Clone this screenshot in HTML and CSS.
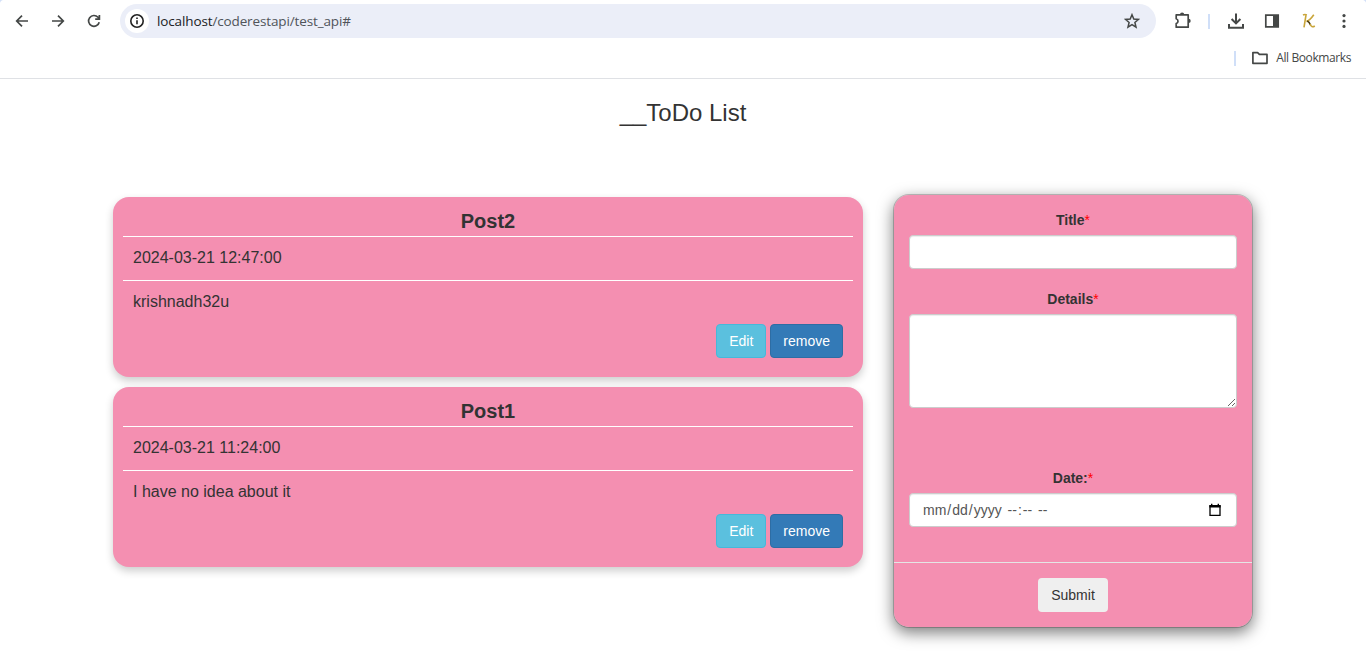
FILE: index.html
```html
<!DOCTYPE html>
<html lang="en">
<head>
<meta charset="utf-8">
<title>ToDo List</title>
<link rel="stylesheet" href="styles.css">
</head>
<body>
<header class="browser">
  <div class="toolbar">
    <svg class="icon back" viewBox="0 0 16 16"><path d="M14 8H3M8 2.7L2.7 8L8 13.3"/></svg>
    <svg class="icon forward" viewBox="0 0 16 16"><path d="M2 8H13M8 2.7L13.3 8L8 13.3"/></svg>
    <svg class="icon reload" viewBox="0 0 16 16"><path d="M13.2 9.2A5.4 5.4 0 1 1 12 4.3L13 5.4M13.4 2V6.2H9.2"/></svg>
    <div class="address">
      <span class="site"><svg class="icon" viewBox="0 0 16 16"><circle cx="8" cy="8" r="6.2"/><path d="M8 7.2V11.3M8 4.6V6"/></svg></span>
      <span class="url"><span class="host">localhost</span>/coderestapi/test_api#</span>
      <svg class="icon star" viewBox="0 0 16 16"><path d="M8 1.7L9.8 6L14.5 6.4L10.9 9.5L12 14.1L8 11.6L4 14.1L5.1 9.5L1.5 6.4L6.2 6Z"/></svg>
    </div>
    <svg class="icon puzzle" viewBox="0 0 18 18"><path d="M2.2 2.8H14.2V15.2H2.2V11.6A2.5 2.5 0 0 0 2.2 6.8Z"/><path class="solid" d="M6 2.4A2.1 1.9 0 0 1 10.2 2.4ZM14.6 6.8A2.1 2.1 0 0 1 14.6 11Z"/></svg>
    <span class="divider toolbar-divider"></span>
    <svg class="icon download" viewBox="0 0 18 18"><path d="M9 1.5V11.2M4.6 7L9 11.4L13.4 7M2 12V15.8H16V12"/></svg>
    <svg class="icon panel" viewBox="0 0 16 16"><path d="M1.8 2.2H14.2V13.8H1.8Z"/><path class="solid" d="M9 2H14.4V14H9Z"/></svg>
    <svg class="icon profile" viewBox="0 0 16 16"><path class="gold" d="M2 2Q4 1 5.8 2M5 2L3 14.3M5.3 8.4Q8.5 8 12.8 1.8"/><path class="dark" d="M6.2 8Q8.3 8.7 9.5 12"/><path class="gold" d="M9.2 11Q10.4 15.2 13.8 13"/></svg>
    <svg class="icon more" viewBox="0 0 16 16"><circle cx="8" cy="2.6" r="1.6"/><circle cx="8" cy="8" r="1.6"/><circle cx="8" cy="13.4" r="1.6"/></svg>
  </div>
  <div class="bookmarks">
    <span class="divider"></span>
    <svg class="icon folder" viewBox="0 0 18 16"><path d="M1.9 2.6H6.6L8.4 4.4H16V13.3H1.9Z"/></svg>
    <span class="bookmarks-label">All Bookmarks</span>
  </div>
</header>
<main>
  <h1 class="page-title">__ToDo List</h1>
  <div class="content">
    <section class="posts">
      <article class="post">
        <h2 class="post-title">Post2</h2>
        <p class="post-row">2024-03-21 12:47:00</p>
        <p class="post-row">krishnadh32u</p>
        <div class="actions"><button class="btn info">Edit</button><button class="btn primary">remove</button></div>
      </article>
      <article class="post">
        <h2 class="post-title">Post1</h2>
        <p class="post-row">2024-03-21 11:24:00</p>
        <p class="post-row">I have no idea about it</p>
        <div class="actions"><button class="btn info">Edit</button><button class="btn primary">remove</button></div>
      </article>
    </section>
    <form class="editor">
      <div class="fields">
        <label class="label" for="title">Title<span class="required">*</span></label>
        <input class="control" id="title" type="text">
        <label class="label details-label" for="details">Details<span class="required">*</span></label>
        <textarea class="control details" id="details"></textarea>
        <label class="label date-label">Date:<span class="required">*</span></label>
        <div class="control date" tabindex="0">
          <span class="date-text"><span class="part">mm</span>/<span class="part">dd</span>/<span class="part">yyyy</span> <span class="part">--</span>:<span class="part">--</span> <span class="part">--</span></span>
          <svg class="calendar" viewBox="0 0 14 14"><path d="M2 3H12V12.4H2Z"/><path class="calendar-top" d="M1.4 2H3V.8H4.4V2H9.6V.8H11V2H12.6V4.6H1.4Z"/></svg>
        </div>
      </div>
      <div class="form-footer"><button class="btn submit" type="button">Submit</button></div>
    </form>
  </div>
</main>
</body>
</html>
```

FILE: styles.css
```css
* { box-sizing: border-box; }
body {
  margin: 0;
  height: 662px;
  overflow: hidden;
  background: #fff;
  color: #333;
  font: 14px/20px "Liberation Sans", Arial, sans-serif;
}
.browser {
  height: 79px;
  border-bottom: 1px solid #dfe1e5;
  font-family: "Open Sans", "Noto Sans", sans-serif;
  background:
    radial-gradient(circle at 100% 100%, transparent 5px, #d3e0f8 6px) 0 0 / 5px 5px no-repeat,
    radial-gradient(circle at 0 100%, transparent 5px, #d3e0f8 6px) 100% 0 / 5px 5px no-repeat,
    #fff;
}
.toolbar { display: flex; align-items: center; height: 42px; padding-left: 14px; }
.icon {
  display: block;
  flex: none;
  width: 16px;
  height: 16px;
  fill: none;
  stroke: #444746;
  stroke-width: 1.7;
}
.forward { margin-left: 20px; }
.reload { margin-left: 20px; }
.address {
  display: flex;
  align-items: center;
  width: 1036px;
  height: 34px;
  margin-left: 18px;
  padding: 0 16px 0 5px;
  border-radius: 17px;
  background: #ebeef8;
}
.site {
  display: flex;
  align-items: center;
  justify-content: center;
  width: 24px;
  height: 24px;
  border-radius: 50%;
  background: #fff;
}
.site .icon { stroke: #222; stroke-width: 1.6; }
.url {
  flex: 1;
  margin-left: 8px;
  color: #50545a;
  font-size: 13.5px;
  letter-spacing: -0.13px;
}
.host { color: #202124; }
.star { stroke-width: 1.5; }
.puzzle { width: 18px; height: 18px; margin-left: 18px; stroke-width: 1.7; stroke-linejoin: round; }
.divider { width: 2px; height: 15px; background: #d0dff8; }
.toolbar-divider { margin-left: 16px; }
.download { width: 18px; height: 18px; margin-left: 17px; stroke-width: 2; }
.panel { margin-left: 19px; }
.icon .solid { fill: #444746; stroke: none; }
.profile { margin-left: 21px; stroke-width: 1.6; }
.gold { stroke: #c9a53a; }
.dark { stroke: #4d3d10; }
.more { margin-left: 19px; fill: #444746; stroke: none; }
.bookmarks {
  display: flex;
  align-items: center;
  justify-content: flex-end;
  height: 32px;
  padding-right: 15px;
}
.folder { width: 18px; margin: 0 7px 0 15px; stroke-linejoin: round; }
.bookmarks-label { color: #444746; font-size: 12px; letter-spacing: -0.4px; }
.page-title { margin: 21px 0 0; font-size: 24px; font-weight: 400; line-height: 26px; text-align: center; }
.content { display: flex; align-items: flex-start; gap: 30px; padding: 68px 113px 0; }
.posts { display: grid; gap: 10px; width: 750px; padding-top: 3px; }
.post {
  height: 180px;
  padding: 10px 10px 0;
  border-radius: 16px;
  background: #f48fb1;
  box-shadow: 0 4px 8px rgba(0, 0, 0, .2);
}
.post-title { margin: 0; font-size: 20px; line-height: 29px; text-align: center; }
.post-row { margin: 0; padding: 9px 10px 11px; border-top: 1px solid #fff; font-size: 16px; line-height: 23px; }
.actions { display: flex; justify-content: flex-end; gap: 4px; padding-right: 10px; }
.btn {
  height: 34px;
  padding: 6px 12px;
  border: 1px solid transparent;
  border-radius: 4px;
  font: 14px/20px "Liberation Sans", Arial, sans-serif;
  color: #fff;
}
.info { border-color: #46b8da; background: #5bc0de; }
.primary { border-color: #2e6da4; background: #337ab7; }
.submit { background: #efefef; color: #333; }
.editor {
  width: 360px;
  height: 434px;
  border: 1px solid rgba(0, 0, 0, .2);
  border-radius: 16px;
  background: #f48fb1;
  background-clip: padding-box;
  box-shadow: 0 5px 15px rgba(0, 0, 0, .5);
}
.fields { height: 367px; padding: 15px; }
.label { display: block; margin-bottom: 5px; font-weight: 700; text-align: center; }
.required { color: #f00; font-weight: 400; }
.control {
  display: block;
  width: 100%;
  height: 34px;
  padding: 6px 12px;
  border: 1px solid #ccc;
  border-radius: 4px;
  background: #fff;
  box-shadow: inset 0 1px 1px rgba(0, 0, 0, .075);
  color: #555;
  font: 14px/20px "Liberation Sans", Arial, sans-serif;
}
.details-label { margin-top: 20px; }
.details { height: 94px; }
.date-label { margin-top: 60px; }
.date { display: flex; align-items: center; justify-content: space-between; padding-right: 14px; }
.part { padding: 0 1px; }
.calendar { width: 14px; height: 14px; fill: none; stroke: #000; stroke-width: 1.3; }
.calendar-top { fill: #000; stroke: none; }
.form-footer { padding-top: 15px; border-top: 1px solid #e5e5e5; text-align: center; }
```
